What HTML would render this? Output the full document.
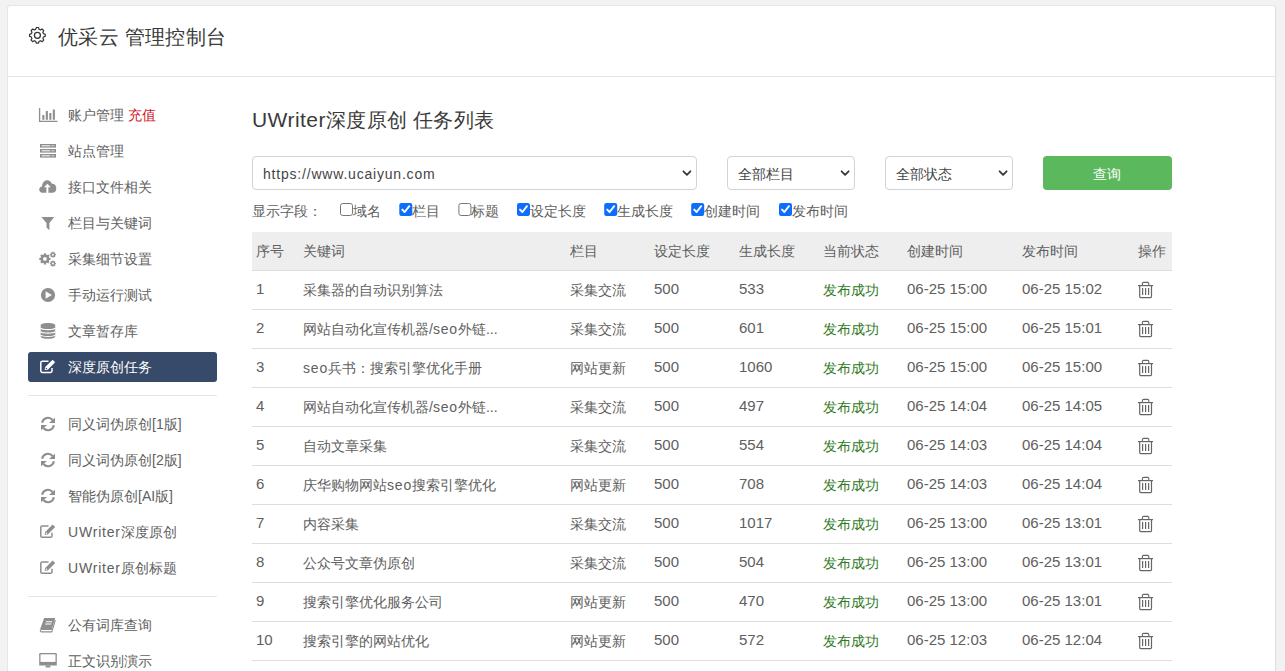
<!DOCTYPE html>
<html><head><meta charset="utf-8"><style>
*{box-sizing:border-box;margin:0;padding:0}
html,body{width:1285px;height:671px;overflow:hidden}
body{background:#f2f2f2;font-family:"Liberation Sans",sans-serif;color:#555;font-size:14px;position:relative}
.card{position:absolute;left:7px;top:5px;width:1269px;height:720px;background:#fff;border:1px solid #e6e6e6;border-right-color:#dedede;border-radius:3px}
.hdrline{position:absolute;left:8px;top:76px;width:1267px;height:1px;background:#e5e5e5}
.t{position:absolute;white-space:nowrap;line-height:20px;height:20px}
.l{letter-spacing:.8px}
.d{font-size:15px;letter-spacing:0;position:relative;top:-1px}
.s{color:#606060;font-size:14px}
.act{color:#fff}
.actbg{position:absolute;left:28px;top:352px;width:189px;height:30px;background:#384a69;border-radius:3px}
.sep{position:absolute;left:28px;width:189px;height:1px;background:#e5e5e5}
.title{font-size:20px;color:#3a3a3a;line-height:26px;height:26px;letter-spacing:.3px}
.sel{position:absolute;top:156px;height:34px;border:1px solid #ced4da;border-radius:4px;background:#fff}
.selt{color:#444}
.btn{position:absolute;left:1043px;top:156px;width:129px;height:34px;background:#5cb85c;border-radius:4px}
.thbg{position:absolute;left:252px;top:232px;width:920px;height:38px;background:#eee}
.hl{position:absolute;left:252px;width:920px;height:1px;background:#ddd}
.c{color:#606060}
.ok{color:#307a24}
.f{color:#606060}
.ov{position:absolute;left:0;top:0}
</style></head><body>
<div class="card"></div>
<div class="hdrline"></div>
<div class="t title" style="left:58px;top:24px">优采云 管理控制台</div>
<div class="actbg"></div>
<div class="sep" style="top:395px"></div>
<div class="sep" style="top:596px"></div>
<div class="t s" style="left:68px;top:105px;">账户管理 <span style="color:#d0141f">充值</span></div><div class="t s" style="left:68px;top:141px;">站点管理</div><div class="t s" style="left:68px;top:177px;">接口文件相关</div><div class="t s" style="left:68px;top:213px;">栏目与关键词</div><div class="t s" style="left:68px;top:249px;">采集细节设置</div><div class="t s" style="left:68px;top:285px;">手动运行测试</div><div class="t s" style="left:68px;top:321px;">文章暂存库</div><div class="t s act" style="left:68px;top:357px;">深度原创任务</div><div class="t s" style="left:68px;top:414px;">同义词伪原创[1版]</div><div class="t s" style="left:68px;top:450px;">同义词伪原创[2版]</div><div class="t s" style="left:68px;top:486px;">智能伪原创[AI版]</div><div class="t s" style="left:68px;top:522px;"><span class="l">UWriter</span>深度原创</div><div class="t s" style="left:68px;top:558px;"><span class="l">UWriter</span>原创标题</div><div class="t s" style="left:68px;top:615px;">公有词库查询</div><div class="t s" style="left:68px;top:651px;">正文识别演示</div>
<div class="t title" style="left:252px;top:107px"><span style="font-size:21px;letter-spacing:.45px">UWriter</span>深度原创 任务列表</div>
<div class="sel" style="left:252px;width:445px"></div>
<div class="sel" style="left:727px;width:128px"></div>
<div class="sel" style="left:885px;width:128px"></div>
<div class="btn"></div>
<div class="t selt" style="left:263px;top:164px;"><span class="l">https://www.ucaiyun.com</span></div>
<div class="t selt" style="left:738px;top:164px;">全部栏目</div>
<div class="t selt" style="left:896px;top:164px;">全部状态</div>
<div class="t " style="left:1093px;top:164px;color:#fff">查询</div>
<div class="t f" style="left:252px;top:201px;">显示字段：</div>
<div class="t f" style="left:352.6px;top:201px;">域名</div><div class="t f" style="left:412.3px;top:201px;">栏目</div><div class="t f" style="left:471.4px;top:201px;">标题</div><div class="t f" style="left:530px;top:201px;">设定长度</div><div class="t f" style="left:617.2px;top:201px;">生成长度</div><div class="t f" style="left:704.2px;top:201px;">创建时间</div><div class="t f" style="left:792px;top:201px;">发布时间</div>
<div class="thbg"></div>
<div class="hl" style="top:270px"></div>
<div class="hl" style="top:309px"></div><div class="hl" style="top:348px"></div><div class="hl" style="top:387px"></div><div class="hl" style="top:426px"></div><div class="hl" style="top:465px"></div><div class="hl" style="top:504px"></div><div class="hl" style="top:543px"></div><div class="hl" style="top:582px"></div><div class="hl" style="top:621px"></div><div class="hl" style="top:660px"></div>
<div class="t c" style="left:256px;top:241px;">序号</div><div class="t c" style="left:303px;top:241px;">关键词</div><div class="t c" style="left:570px;top:241px;">栏目</div><div class="t c" style="left:654px;top:241px;">设定长度</div><div class="t c" style="left:739px;top:241px;">生成长度</div><div class="t c" style="left:823px;top:241px;">当前状态</div><div class="t c" style="left:907px;top:241px;">创建时间</div><div class="t c" style="left:1022px;top:241px;">发布时间</div><div class="t c" style="left:1138px;top:241px;">操作</div><div class="t c" style="left:256px;top:280px;"><span class="d">1</span></div><div class="t c" style="left:303px;top:280px;">采集器的自动识别算法</div><div class="t c" style="left:570px;top:280px;">采集交流</div><div class="t c" style="left:654px;top:280px;"><span class="d">500</span></div><div class="t c" style="left:739px;top:280px;"><span class="d">533</span></div><div class="t c ok" style="left:823px;top:280px;">发布成功</div><div class="t c" style="left:907px;top:280px;"><span class="d">06-25 15:00</span></div><div class="t c" style="left:1022px;top:280px;"><span class="d">06-25 15:02</span></div><div class="t c" style="left:256px;top:319px;"><span class="d">2</span></div><div class="t c" style="left:303px;top:319px;">网站自动化宣传机器/<span class="l">seo</span>外链...</div><div class="t c" style="left:570px;top:319px;">采集交流</div><div class="t c" style="left:654px;top:319px;"><span class="d">500</span></div><div class="t c" style="left:739px;top:319px;"><span class="d">601</span></div><div class="t c ok" style="left:823px;top:319px;">发布成功</div><div class="t c" style="left:907px;top:319px;"><span class="d">06-25 15:00</span></div><div class="t c" style="left:1022px;top:319px;"><span class="d">06-25 15:01</span></div><div class="t c" style="left:256px;top:358px;"><span class="d">3</span></div><div class="t c" style="left:303px;top:358px;"><span class="l">seo</span>兵书：搜索引擎优化手册</div><div class="t c" style="left:570px;top:358px;">网站更新</div><div class="t c" style="left:654px;top:358px;"><span class="d">500</span></div><div class="t c" style="left:739px;top:358px;"><span class="d">1060</span></div><div class="t c ok" style="left:823px;top:358px;">发布成功</div><div class="t c" style="left:907px;top:358px;"><span class="d">06-25 15:00</span></div><div class="t c" style="left:1022px;top:358px;"><span class="d">06-25 15:00</span></div><div class="t c" style="left:256px;top:397px;"><span class="d">4</span></div><div class="t c" style="left:303px;top:397px;">网站自动化宣传机器/<span class="l">seo</span>外链...</div><div class="t c" style="left:570px;top:397px;">采集交流</div><div class="t c" style="left:654px;top:397px;"><span class="d">500</span></div><div class="t c" style="left:739px;top:397px;"><span class="d">497</span></div><div class="t c ok" style="left:823px;top:397px;">发布成功</div><div class="t c" style="left:907px;top:397px;"><span class="d">06-25 14:04</span></div><div class="t c" style="left:1022px;top:397px;"><span class="d">06-25 14:05</span></div><div class="t c" style="left:256px;top:436px;"><span class="d">5</span></div><div class="t c" style="left:303px;top:436px;">自动文章采集</div><div class="t c" style="left:570px;top:436px;">采集交流</div><div class="t c" style="left:654px;top:436px;"><span class="d">500</span></div><div class="t c" style="left:739px;top:436px;"><span class="d">554</span></div><div class="t c ok" style="left:823px;top:436px;">发布成功</div><div class="t c" style="left:907px;top:436px;"><span class="d">06-25 14:03</span></div><div class="t c" style="left:1022px;top:436px;"><span class="d">06-25 14:04</span></div><div class="t c" style="left:256px;top:475px;"><span class="d">6</span></div><div class="t c" style="left:303px;top:475px;">庆华购物网站<span class="l">seo</span>搜索引擎优化</div><div class="t c" style="left:570px;top:475px;">网站更新</div><div class="t c" style="left:654px;top:475px;"><span class="d">500</span></div><div class="t c" style="left:739px;top:475px;"><span class="d">708</span></div><div class="t c ok" style="left:823px;top:475px;">发布成功</div><div class="t c" style="left:907px;top:475px;"><span class="d">06-25 14:03</span></div><div class="t c" style="left:1022px;top:475px;"><span class="d">06-25 14:04</span></div><div class="t c" style="left:256px;top:514px;"><span class="d">7</span></div><div class="t c" style="left:303px;top:514px;">内容采集</div><div class="t c" style="left:570px;top:514px;">采集交流</div><div class="t c" style="left:654px;top:514px;"><span class="d">500</span></div><div class="t c" style="left:739px;top:514px;"><span class="d">1017</span></div><div class="t c ok" style="left:823px;top:514px;">发布成功</div><div class="t c" style="left:907px;top:514px;"><span class="d">06-25 13:00</span></div><div class="t c" style="left:1022px;top:514px;"><span class="d">06-25 13:01</span></div><div class="t c" style="left:256px;top:553px;"><span class="d">8</span></div><div class="t c" style="left:303px;top:553px;">公众号文章伪原创</div><div class="t c" style="left:570px;top:553px;">采集交流</div><div class="t c" style="left:654px;top:553px;"><span class="d">500</span></div><div class="t c" style="left:739px;top:553px;"><span class="d">504</span></div><div class="t c ok" style="left:823px;top:553px;">发布成功</div><div class="t c" style="left:907px;top:553px;"><span class="d">06-25 13:00</span></div><div class="t c" style="left:1022px;top:553px;"><span class="d">06-25 13:01</span></div><div class="t c" style="left:256px;top:592px;"><span class="d">9</span></div><div class="t c" style="left:303px;top:592px;">搜索引擎优化服务公司</div><div class="t c" style="left:570px;top:592px;">网站更新</div><div class="t c" style="left:654px;top:592px;"><span class="d">500</span></div><div class="t c" style="left:739px;top:592px;"><span class="d">470</span></div><div class="t c ok" style="left:823px;top:592px;">发布成功</div><div class="t c" style="left:907px;top:592px;"><span class="d">06-25 13:00</span></div><div class="t c" style="left:1022px;top:592px;"><span class="d">06-25 13:01</span></div><div class="t c" style="left:256px;top:631px;"><span class="d">10</span></div><div class="t c" style="left:303px;top:631px;">搜索引擎的网站优化</div><div class="t c" style="left:570px;top:631px;">网站更新</div><div class="t c" style="left:654px;top:631px;"><span class="d">500</span></div><div class="t c" style="left:739px;top:631px;"><span class="d">572</span></div><div class="t c ok" style="left:823px;top:631px;">发布成功</div><div class="t c" style="left:907px;top:631px;"><span class="d">06-25 12:03</span></div><div class="t c" style="left:1022px;top:631px;"><span class="d">06-25 12:04</span></div>
<svg class="ov" width="1285" height="671" viewBox="0 0 1285 671"><path d="M35.70 29.34 L36.30 27.48 L38.50 27.48 L39.10 29.34 L39.44 29.45 L39.77 29.57 L40.10 29.72 L40.41 29.88 L42.15 28.99 L43.71 30.55 L42.82 32.29 L42.98 32.60 L43.13 32.93 L43.25 33.26 L43.36 33.60 L45.22 34.20 L45.22 36.40 L43.36 37.00 L43.25 37.34 L43.13 37.67 L42.98 38.00 L42.82 38.31 L43.71 40.05 L42.15 41.61 L40.41 40.72 L40.10 40.88 L39.77 41.03 L39.44 41.15 L39.10 41.26 L38.50 43.12 L36.30 43.12 L35.70 41.26 L35.36 41.15 L35.03 41.03 L34.70 40.88 L34.39 40.72 L32.65 41.61 L31.09 40.05 L31.98 38.31 L31.82 38.00 L31.67 37.67 L31.55 37.34 L31.44 37.00 L29.58 36.40 L29.58 34.20 L31.44 33.60 L31.55 33.26 L31.67 32.93 L31.82 32.60 L31.98 32.29 L31.09 30.55 L32.65 28.99 L34.39 29.88 L34.70 29.72 L35.03 29.57 L35.36 29.45Z" fill="none" stroke="#333" stroke-width="1.2" stroke-linejoin="round"/><circle cx="37.4" cy="35.3" r="3" fill="none" stroke="#333" stroke-width="1.3"/><path d="M39.6 108 V121.4 H57.5" fill="none" stroke="#8e8e8e" stroke-width="1.3"/><rect x="42.3" y="115" width="2.1" height="4.799999999999997" fill="#8e8e8e"/><rect x="45.8" y="111" width="2.1" height="8.799999999999997" fill="#8e8e8e"/><rect x="49.3" y="113" width="2.1" height="6.799999999999997" fill="#8e8e8e"/><rect x="52.8" y="109.5" width="2.1" height="10.299999999999997" fill="#8e8e8e"/><rect x="40" y="144" width="16" height="3.6" fill="#8e8e8e"/><rect x="41.6" y="145.3" width="8.6" height="1" fill="#fff"/><rect x="51.4" y="145.3" width="3" height="1" fill="#d6d6d6"/><rect x="40" y="149" width="16" height="3.6" fill="#8e8e8e"/><rect x="41.6" y="150.3" width="8.6" height="1" fill="#fff"/><rect x="51.4" y="150.3" width="3" height="1" fill="#d6d6d6"/><rect x="40" y="154" width="16" height="3.6" fill="#8e8e8e"/><rect x="41.6" y="155.3" width="8.6" height="1" fill="#fff"/><rect x="51.4" y="155.3" width="3" height="1" fill="#d6d6d6"/><path d="M42.3 192.8 C40.5 192.8 39.2 191.4 39.2 189.6 C39.2 187.9 40.4 186.6 42 186.4 C42.3 182.8 44.3 180.3 47.2 180.3 C49.6 180.3 51.2 181.9 51.9 183.8 C54.6 183.6 56.3 185.8 56.3 188.4 C56.3 190.9 54.6 192.8 52.4 192.8 Z" fill="#8e8e8e"/><path d="M47.4 183.7 L50.8 187.3 H48.4 V193 H46.4 V187.3 H44 Z" fill="#fff"/><path d="M41.3 217 H54.2 L49.4 223 V230.2 L46.5 227.6 V223 Z" fill="#8e8e8e"/><circle cx="44.9" cy="258.9" r="4.4" fill="#8e8e8e"/><rect x="43.85" y="253.29999999999998" width="2.1" height="5.6" fill="#8e8e8e" transform="rotate(0 44.9 258.9)"/><rect x="43.85" y="253.29999999999998" width="2.1" height="5.6" fill="#8e8e8e" transform="rotate(45 44.9 258.9)"/><rect x="43.85" y="253.29999999999998" width="2.1" height="5.6" fill="#8e8e8e" transform="rotate(90 44.9 258.9)"/><rect x="43.85" y="253.29999999999998" width="2.1" height="5.6" fill="#8e8e8e" transform="rotate(135 44.9 258.9)"/><rect x="43.85" y="253.29999999999998" width="2.1" height="5.6" fill="#8e8e8e" transform="rotate(180 44.9 258.9)"/><rect x="43.85" y="253.29999999999998" width="2.1" height="5.6" fill="#8e8e8e" transform="rotate(225 44.9 258.9)"/><rect x="43.85" y="253.29999999999998" width="2.1" height="5.6" fill="#8e8e8e" transform="rotate(270 44.9 258.9)"/><rect x="43.85" y="253.29999999999998" width="2.1" height="5.6" fill="#8e8e8e" transform="rotate(315 44.9 258.9)"/><circle cx="44.9" cy="258.9" r="1.9" fill="#fff"/><circle cx="52.9" cy="254.7" r="2.3" fill="#8e8e8e"/><rect x="52.25" y="251.75" width="1.3" height="2.95" fill="#8e8e8e" transform="rotate(0 52.9 254.7)"/><rect x="52.25" y="251.75" width="1.3" height="2.95" fill="#8e8e8e" transform="rotate(45 52.9 254.7)"/><rect x="52.25" y="251.75" width="1.3" height="2.95" fill="#8e8e8e" transform="rotate(90 52.9 254.7)"/><rect x="52.25" y="251.75" width="1.3" height="2.95" fill="#8e8e8e" transform="rotate(135 52.9 254.7)"/><rect x="52.25" y="251.75" width="1.3" height="2.95" fill="#8e8e8e" transform="rotate(180 52.9 254.7)"/><rect x="52.25" y="251.75" width="1.3" height="2.95" fill="#8e8e8e" transform="rotate(225 52.9 254.7)"/><rect x="52.25" y="251.75" width="1.3" height="2.95" fill="#8e8e8e" transform="rotate(270 52.9 254.7)"/><rect x="52.25" y="251.75" width="1.3" height="2.95" fill="#8e8e8e" transform="rotate(315 52.9 254.7)"/><circle cx="52.9" cy="254.7" r="1.0" fill="#fff"/><circle cx="52.9" cy="263.6" r="2.3" fill="#8e8e8e"/><rect x="52.25" y="260.65000000000003" width="1.3" height="2.95" fill="#8e8e8e" transform="rotate(0 52.9 263.6)"/><rect x="52.25" y="260.65000000000003" width="1.3" height="2.95" fill="#8e8e8e" transform="rotate(45 52.9 263.6)"/><rect x="52.25" y="260.65000000000003" width="1.3" height="2.95" fill="#8e8e8e" transform="rotate(90 52.9 263.6)"/><rect x="52.25" y="260.65000000000003" width="1.3" height="2.95" fill="#8e8e8e" transform="rotate(135 52.9 263.6)"/><rect x="52.25" y="260.65000000000003" width="1.3" height="2.95" fill="#8e8e8e" transform="rotate(180 52.9 263.6)"/><rect x="52.25" y="260.65000000000003" width="1.3" height="2.95" fill="#8e8e8e" transform="rotate(225 52.9 263.6)"/><rect x="52.25" y="260.65000000000003" width="1.3" height="2.95" fill="#8e8e8e" transform="rotate(270 52.9 263.6)"/><rect x="52.25" y="260.65000000000003" width="1.3" height="2.95" fill="#8e8e8e" transform="rotate(315 52.9 263.6)"/><circle cx="52.9" cy="263.6" r="1.0" fill="#fff"/><circle cx="48" cy="295" r="7.1" fill="#8e8e8e"/><path d="M45.6 291.2 V298.8 L51.8 295 Z" fill="#fff"/><path d="M40.7 325.5 C40.7 322.3 55.2 322.3 55.2 325.5 V336.5 C55.2 339.6 40.7 339.6 40.7 336.5 Z" fill="#8e8e8e"/><path d="M40.5 328.3 C43 330.09999999999997 53 330.09999999999997 55.4 328.3" fill="none" stroke="#fff" stroke-width="1.1"/><path d="M40.5 331.8 C43 333.59999999999997 53 333.59999999999997 55.4 331.8" fill="none" stroke="#fff" stroke-width="1.1"/><path d="M40.5 335.1 C43 336.9 53 336.9 55.4 335.1" fill="none" stroke="#fff" stroke-width="1.1"/><path d="M48.5 361.3 H42.2 Q40.8 361.3 40.8 362.7 V371.1 Q40.8 372.5 42.2 372.5 H50.6 Q52 372.5 52 371.1 V368.0" fill="none" stroke="#fff" stroke-width="1.5"/><path d="M44.6 369.9 L45.2 367.1 L52.6 359.7 L55.2 362.3 L47.8 369.7 Z" fill="#fff"/><circle cx="46.4" cy="368.5" r="0.7" fill="#384a69"/><path d="M42.1 422.8 A6 6 0 0 1 52.6 420" fill="none" stroke="#8e8e8e" stroke-width="2.0"/><path d="M55 417.7 V423 H49 Z" fill="#8e8e8e"/><path d="M53.9 425.2 A6 6 0 0 1 43.4 428" fill="none" stroke="#8e8e8e" stroke-width="2.0"/><path d="M41 430.3 V425 H47 Z" fill="#8e8e8e"/><path d="M42.1 458.8 A6 6 0 0 1 52.6 456" fill="none" stroke="#8e8e8e" stroke-width="2.0"/><path d="M55 453.7 V459 H49 Z" fill="#8e8e8e"/><path d="M53.9 461.2 A6 6 0 0 1 43.4 464" fill="none" stroke="#8e8e8e" stroke-width="2.0"/><path d="M41 466.3 V461 H47 Z" fill="#8e8e8e"/><path d="M42.1 494.8 A6 6 0 0 1 52.6 492" fill="none" stroke="#8e8e8e" stroke-width="2.0"/><path d="M55 489.7 V495 H49 Z" fill="#8e8e8e"/><path d="M53.9 497.2 A6 6 0 0 1 43.4 500" fill="none" stroke="#8e8e8e" stroke-width="2.0"/><path d="M41 502.3 V497 H47 Z" fill="#8e8e8e"/><path d="M48.5 526.0999999999999 H42.2 Q40.8 526.0999999999999 40.8 527.5 V535.9 Q40.8 537.3 42.2 537.3 H50.6 Q52 537.3 52 535.9 V532.8" fill="none" stroke="#8e8e8e" stroke-width="1.5"/><path d="M44.6 534.6999999999999 L45.2 531.9 L52.6 524.5 L55.2 527.0999999999999 L47.8 534.5 Z" fill="#8e8e8e"/><circle cx="46.4" cy="533.3" r="0.7" fill="#fff"/><path d="M48.5 562.0999999999999 H42.2 Q40.8 562.0999999999999 40.8 563.5 V571.9 Q40.8 573.3 42.2 573.3 H50.6 Q52 573.3 52 571.9 V568.8" fill="none" stroke="#8e8e8e" stroke-width="1.5"/><path d="M44.6 570.6999999999999 L45.2 567.9 L52.6 560.5 L55.2 563.0999999999999 L47.8 570.5 Z" fill="#8e8e8e"/><circle cx="46.4" cy="569.3" r="0.7" fill="#fff"/><path d="M44.2 618 H55.2 L51.6 630 H41.2 Q40 630 40.3 628.8 Z" fill="#8e8e8e"/><path d="M40.4 629.6 Q40 631.9 41.8 631.9 H51.8 L55.3 620" fill="none" stroke="#8e8e8e" stroke-width="1.1"/><path d="M46.1 621.2 H52.3 L52 622.2 H45.8 Z M45.3 623.6 H51.5 L51.2 624.6 H45 Z" fill="#fff"/><path d="M40.4 653 H55.6 Q56.8 653 56.8 654.2 V665.6 H39.2 V654.2 Q39.2 653 40.4 653 Z" fill="#8e8e8e"/><rect x="40.5" y="654.3" width="15" height="7.6" fill="#fff"/><rect x="45.6" y="665.5" width="4.8" height="2" fill="#8e8e8e"/><path d="M1138 285.6 H1153" stroke="#666" stroke-width="1.2"/><path d="M1142.4 285.4 V283.6 Q1142.4 282.4 1143.6 282.4 H1147.6 Q1148.8 282.4 1148.8 283.6 V285.4" fill="none" stroke="#666" stroke-width="1.1"/><path d="M1139.7 285.8 V296.6 Q1139.7 297.6 1140.7 297.6 H1150.5 Q1151.5 297.6 1151.5 296.6 V285.8" fill="none" stroke="#666" stroke-width="1.2"/><rect x="1142.0" y="288" width="1.2" height="7" fill="#666"/><rect x="1145.0" y="288" width="1.2" height="7" fill="#666"/><rect x="1148.0" y="288" width="1.2" height="7" fill="#666"/><path d="M1138 324.6 H1153" stroke="#666" stroke-width="1.2"/><path d="M1142.4 324.4 V322.6 Q1142.4 321.4 1143.6 321.4 H1147.6 Q1148.8 321.4 1148.8 322.6 V324.4" fill="none" stroke="#666" stroke-width="1.1"/><path d="M1139.7 324.8 V335.6 Q1139.7 336.6 1140.7 336.6 H1150.5 Q1151.5 336.6 1151.5 335.6 V324.8" fill="none" stroke="#666" stroke-width="1.2"/><rect x="1142.0" y="327" width="1.2" height="7" fill="#666"/><rect x="1145.0" y="327" width="1.2" height="7" fill="#666"/><rect x="1148.0" y="327" width="1.2" height="7" fill="#666"/><path d="M1138 363.6 H1153" stroke="#666" stroke-width="1.2"/><path d="M1142.4 363.4 V361.6 Q1142.4 360.4 1143.6 360.4 H1147.6 Q1148.8 360.4 1148.8 361.6 V363.4" fill="none" stroke="#666" stroke-width="1.1"/><path d="M1139.7 363.8 V374.6 Q1139.7 375.6 1140.7 375.6 H1150.5 Q1151.5 375.6 1151.5 374.6 V363.8" fill="none" stroke="#666" stroke-width="1.2"/><rect x="1142.0" y="366" width="1.2" height="7" fill="#666"/><rect x="1145.0" y="366" width="1.2" height="7" fill="#666"/><rect x="1148.0" y="366" width="1.2" height="7" fill="#666"/><path d="M1138 402.6 H1153" stroke="#666" stroke-width="1.2"/><path d="M1142.4 402.4 V400.6 Q1142.4 399.4 1143.6 399.4 H1147.6 Q1148.8 399.4 1148.8 400.6 V402.4" fill="none" stroke="#666" stroke-width="1.1"/><path d="M1139.7 402.8 V413.6 Q1139.7 414.6 1140.7 414.6 H1150.5 Q1151.5 414.6 1151.5 413.6 V402.8" fill="none" stroke="#666" stroke-width="1.2"/><rect x="1142.0" y="405" width="1.2" height="7" fill="#666"/><rect x="1145.0" y="405" width="1.2" height="7" fill="#666"/><rect x="1148.0" y="405" width="1.2" height="7" fill="#666"/><path d="M1138 441.6 H1153" stroke="#666" stroke-width="1.2"/><path d="M1142.4 441.4 V439.6 Q1142.4 438.4 1143.6 438.4 H1147.6 Q1148.8 438.4 1148.8 439.6 V441.4" fill="none" stroke="#666" stroke-width="1.1"/><path d="M1139.7 441.8 V452.6 Q1139.7 453.6 1140.7 453.6 H1150.5 Q1151.5 453.6 1151.5 452.6 V441.8" fill="none" stroke="#666" stroke-width="1.2"/><rect x="1142.0" y="444" width="1.2" height="7" fill="#666"/><rect x="1145.0" y="444" width="1.2" height="7" fill="#666"/><rect x="1148.0" y="444" width="1.2" height="7" fill="#666"/><path d="M1138 480.6 H1153" stroke="#666" stroke-width="1.2"/><path d="M1142.4 480.4 V478.6 Q1142.4 477.4 1143.6 477.4 H1147.6 Q1148.8 477.4 1148.8 478.6 V480.4" fill="none" stroke="#666" stroke-width="1.1"/><path d="M1139.7 480.8 V491.6 Q1139.7 492.6 1140.7 492.6 H1150.5 Q1151.5 492.6 1151.5 491.6 V480.8" fill="none" stroke="#666" stroke-width="1.2"/><rect x="1142.0" y="483" width="1.2" height="7" fill="#666"/><rect x="1145.0" y="483" width="1.2" height="7" fill="#666"/><rect x="1148.0" y="483" width="1.2" height="7" fill="#666"/><path d="M1138 519.6 H1153" stroke="#666" stroke-width="1.2"/><path d="M1142.4 519.4 V517.6 Q1142.4 516.4 1143.6 516.4 H1147.6 Q1148.8 516.4 1148.8 517.6 V519.4" fill="none" stroke="#666" stroke-width="1.1"/><path d="M1139.7 519.8 V530.6 Q1139.7 531.6 1140.7 531.6 H1150.5 Q1151.5 531.6 1151.5 530.6 V519.8" fill="none" stroke="#666" stroke-width="1.2"/><rect x="1142.0" y="522" width="1.2" height="7" fill="#666"/><rect x="1145.0" y="522" width="1.2" height="7" fill="#666"/><rect x="1148.0" y="522" width="1.2" height="7" fill="#666"/><path d="M1138 558.6 H1153" stroke="#666" stroke-width="1.2"/><path d="M1142.4 558.4 V556.6 Q1142.4 555.4 1143.6 555.4 H1147.6 Q1148.8 555.4 1148.8 556.6 V558.4" fill="none" stroke="#666" stroke-width="1.1"/><path d="M1139.7 558.8 V569.6 Q1139.7 570.6 1140.7 570.6 H1150.5 Q1151.5 570.6 1151.5 569.6 V558.8" fill="none" stroke="#666" stroke-width="1.2"/><rect x="1142.0" y="561" width="1.2" height="7" fill="#666"/><rect x="1145.0" y="561" width="1.2" height="7" fill="#666"/><rect x="1148.0" y="561" width="1.2" height="7" fill="#666"/><path d="M1138 597.6 H1153" stroke="#666" stroke-width="1.2"/><path d="M1142.4 597.4 V595.6 Q1142.4 594.4 1143.6 594.4 H1147.6 Q1148.8 594.4 1148.8 595.6 V597.4" fill="none" stroke="#666" stroke-width="1.1"/><path d="M1139.7 597.8 V608.6 Q1139.7 609.6 1140.7 609.6 H1150.5 Q1151.5 609.6 1151.5 608.6 V597.8" fill="none" stroke="#666" stroke-width="1.2"/><rect x="1142.0" y="600" width="1.2" height="7" fill="#666"/><rect x="1145.0" y="600" width="1.2" height="7" fill="#666"/><rect x="1148.0" y="600" width="1.2" height="7" fill="#666"/><path d="M1138 636.6 H1153" stroke="#666" stroke-width="1.2"/><path d="M1142.4 636.4 V634.6 Q1142.4 633.4 1143.6 633.4 H1147.6 Q1148.8 633.4 1148.8 634.6 V636.4" fill="none" stroke="#666" stroke-width="1.1"/><path d="M1139.7 636.8 V647.6 Q1139.7 648.6 1140.7 648.6 H1150.5 Q1151.5 648.6 1151.5 647.6 V636.8" fill="none" stroke="#666" stroke-width="1.2"/><rect x="1142.0" y="639" width="1.2" height="7" fill="#666"/><rect x="1145.0" y="639" width="1.2" height="7" fill="#666"/><rect x="1148.0" y="639" width="1.2" height="7" fill="#666"/><path d="M683.4 171.3 L686.9 174.8 L690.4 171.3" fill="none" stroke="#343a40" stroke-width="1.8" stroke-linecap="round" stroke-linejoin="round"/><path d="M841.6 171.3 L845.1 174.8 L848.6 171.3" fill="none" stroke="#343a40" stroke-width="1.8" stroke-linecap="round" stroke-linejoin="round"/><path d="M999.6 171.3 L1003.1 174.8 L1006.6 171.3" fill="none" stroke="#343a40" stroke-width="1.8" stroke-linecap="round" stroke-linejoin="round"/><rect x="340.5" y="203.5" width="12" height="12" rx="2.2" fill="#fff" stroke="#767676" stroke-width="1"/><rect x="399.3" y="203" width="13" height="13" rx="2.2" fill="#0d6efd"/><path d="M402.3 209.6 L404.7 212 L409.3 206.2" fill="none" stroke="#fff" stroke-width="1.9" stroke-linecap="round" stroke-linejoin="round"/><rect x="458.9" y="203.5" width="12" height="12" rx="2.2" fill="#fff" stroke="#767676" stroke-width="1"/><rect x="517" y="203" width="13" height="13" rx="2.2" fill="#0d6efd"/><path d="M520 209.6 L522.4 212 L527 206.2" fill="none" stroke="#fff" stroke-width="1.9" stroke-linecap="round" stroke-linejoin="round"/><rect x="604.2" y="203" width="13" height="13" rx="2.2" fill="#0d6efd"/><path d="M607.2 209.6 L609.6 212 L614.2 206.2" fill="none" stroke="#fff" stroke-width="1.9" stroke-linecap="round" stroke-linejoin="round"/><rect x="691.2" y="203" width="13" height="13" rx="2.2" fill="#0d6efd"/><path d="M694.2 209.6 L696.6 212 L701.2 206.2" fill="none" stroke="#fff" stroke-width="1.9" stroke-linecap="round" stroke-linejoin="round"/><rect x="779" y="203" width="13" height="13" rx="2.2" fill="#0d6efd"/><path d="M782 209.6 L784.4 212 L789 206.2" fill="none" stroke="#fff" stroke-width="1.9" stroke-linecap="round" stroke-linejoin="round"/></svg>
</body></html>
